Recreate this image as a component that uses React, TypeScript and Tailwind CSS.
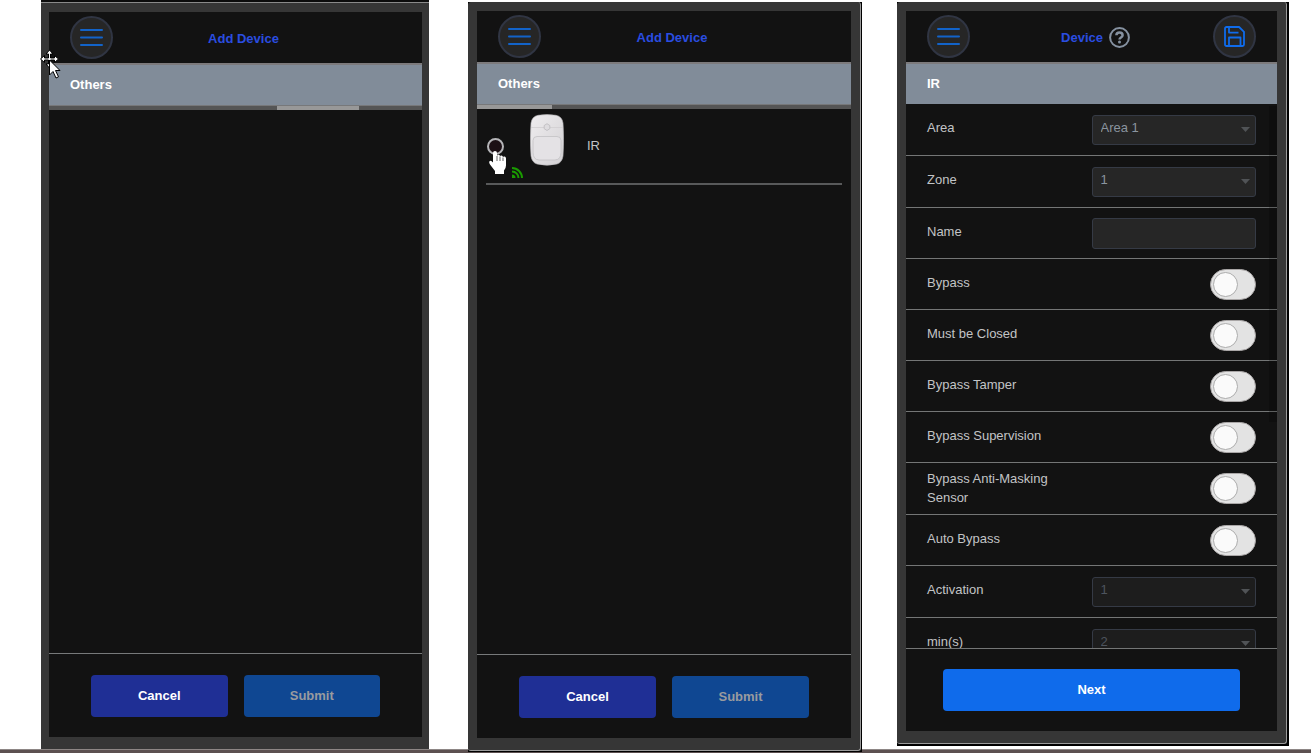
import type { ReactNode } from 'react';

function MenuButton() {
  return (
    <button
      type="button"
      aria-label="Menu"
      className="flex size-[43px] shrink-0 items-center justify-center rounded-full border-2 border-[#303543] bg-[#262626]"
    >
      <svg viewBox="0 0 23 17" className="h-[17px] w-[23px]" stroke="#1263c9" strokeWidth="2" strokeLinecap="round">
        <path d="M1 1h21M1 8.5h21M1 16h21" />
      </svg>
    </button>
  );
}

function SaveButton() {
  return (
    <button
      type="button"
      aria-label="Save"
      className="flex size-[43px] shrink-0 items-center justify-center rounded-full border-2 border-[#303543] bg-[#262626]"
    >
      <svg viewBox="0 0 21 21" className="size-[21px]" fill="none" stroke="#0f6cec" strokeWidth="1.8" strokeLinejoin="round">
        <path d="M2.5 1h12.600L20 5.800v12.700a1.500 1.500 0 0 1-1.500 1.500h-16A1.500 1.500 0 0 1 1 18.500v-16A1.500 1.500 0 0 1 2.500 1Z" />
        <path d="M5 1v5.600h9.500M5 20v-8.500h11.500V20" />
      </svg>
    </button>
  );
}

function HelpIcon() {
  return (
    <svg viewBox="0 0 21 21" className="size-[21px]" fill="none" stroke="#8591a0">
      <circle cx="10.5" cy="10.5" r="9.400" strokeWidth="2" />
      <path d="M7.400 8.300c0-3.800 6.200-3.800 6.200 0 0 2.200-3.100 2.100-3.100 4.200" strokeWidth="2.500" />
      <circle cx="10.5" cy="15" r="1.500" fill="#8591a0" stroke="none" />
    </svg>
  );
}

function Bar({ children }: { children: ReactNode }) {
  return (
    <h2 className="flex h-[42px] shrink-0 items-center border-t-2 border-[#7c7a7c] bg-[#818c99] px-[21px] text-[13px] font-bold text-white">
      {children}
    </h2>
  );
}

function AddDeviceHeader() {
  return (
    <header className="flex h-[51px] shrink-0 items-center pr-12 pl-[21px]">
      <MenuButton />
      <h1 className="flex-1 pt-0.5 text-center text-[13px] font-bold text-[#2a4de0]">Add Device</h1>
    </header>
  );
}

function AddDeviceFooter() {
  return (
    <footer className="flex h-[84px] shrink-0 items-center gap-4 border-t border-[#77797a] px-[42px]">
      <button type="button" className="h-[42px] flex-1 rounded-[4px] bg-[#1f2f95] text-[13px] font-bold text-white">
        Cancel
      </button>
      <button
        type="button"
        disabled
        className="h-[42px] flex-1 rounded-[4px] bg-[#0f4792] text-[13px] font-bold text-[#999b9f]"
      >
        Submit
      </button>
    </footer>
  );
}

function Sensor() {
  return (
    <svg viewBox="0 0 34 52" className="h-[52px] w-[34px]">
      <defs>
        <linearGradient id="shell" x1="0" y1="0" x2="1" y2="1">
          <stop offset="0" stopColor="#efedef" />
          <stop offset="1" stopColor="#d2d0d3" />
        </linearGradient>
      </defs>
      <path
        d="M8 1.300Q17-.2 26 1.300Q32 2.500 33 9Q34.300 26 33 42Q32 48.500 27 50Q17 52.500 7 50Q2 48.500 1 42Q-.3 26 1 9Q2 2.500 8 1.300Z"
        fill="url(#shell)"
        stroke="#b9b7ba"
        strokeWidth=".6"
      />
      <path d="M1 13.500H14M20 13.500H33" fill="none" stroke="#d0ced1" strokeWidth=".8" />
      <path d="M14.200 11.500l2.800-1.800 2.800 1.800v3.200l-2.800 1.800-2.800-1.800Z" fill="#dedcdf" stroke="#bbb9bc" strokeWidth=".8" />
      <path
        d="M7 22.500h20q4 0 4 4v12q0 7-6 7.500H9q-6-.5-6-7.500v-12q0-4 4-4Z"
        fill="#e4e2e5"
        stroke="#c3c1c4"
        strokeWidth=".8"
      />
    </svg>
  );
}

function SelectRow({ id, label, value, disabled }: { id: string; label: string; value: string; disabled?: boolean }) {
  return (
    <div className="flex h-[52px] shrink-0 items-center justify-between border-b border-[#747676] px-[21px]">
      <label htmlFor={id} className="pb-1 leading-[19px]">
        {label}
      </label>
      <div className="grid w-1/2 items-center">
        <select
          id={id}
          disabled={disabled}
          className="col-start-1 row-start-1 h-[30px] appearance-none rounded-[3px] border border-[#353a45] bg-[#262626] px-2 pb-1 text-[#8a949f] disabled:bg-[#1d1d1d] disabled:text-[#4d545e] disabled:opacity-100"
        >
          <option>{value}</option>
        </select>
        <svg
          viewBox="0 0 9 5"
          className="pointer-events-none col-start-1 row-start-1 mr-1.5 h-[5px] w-[9px] justify-self-end"
          fill="#505356"
        >
          <path d="M0 0h9L4.500 5Z" />
        </svg>
      </div>
    </div>
  );
}

function ToggleRow({ id, label, tall }: { id: string; label: string; tall?: boolean }) {
  return (
    <div
      className={`flex shrink-0 items-center justify-between border-b border-[#747676] px-[21px] ${tall ? 'h-[52px]' : 'h-[51px]'}`}
    >
      <label htmlFor={id} className={`max-w-[150px] leading-[19px] ${tall ? 'pb-0.5' : 'pb-1'}`}>
        {label}
      </label>
      <input
        id={id}
        type="checkbox"
        role="switch"
        className="block h-[31px] w-[46px] shrink-0 appearance-none rounded-full border border-[#a9a6a6] bg-[#e3e3e3] p-0.5 before:block before:size-[25px] before:rounded-full before:border before:border-[#acacac] before:bg-[#fafafa] before:content-[''] checked:bg-[#0f6beb] checked:before:ml-auto"
      />
    </div>
  );
}

export default function App() {
  return (
    <main className="relative flex h-screen min-h-[600px] bg-white pr-[22px] pl-[41px] font-['Liberation_Sans',Arial,sans-serif] text-[13px] text-[#c2c4c6]">
      <div className="absolute inset-x-0 bottom-0 h-1 border-t border-[#8d8685] bg-[#5c5050]" />

      <section className="relative mb-1 flex flex-[388] border-t-2 border-[#0c0c0c]">
        <div className="flex flex-1 border-t border-[#8a8a8a] bg-[#363636] pt-[9px] pr-[7px] pb-3 pl-2">
          <div className="flex flex-1 flex-col bg-[#121212]">
            <AddDeviceHeader />
            <Bar>Others</Bar>
            <div className="flex h-[5px] shrink-0 border-t border-[#77787a] bg-[#555555]">
              <div className="w-[61%]" />
              <div className="w-[22%] bg-[#989898]" />
            </div>
            <div className="flex-1" />
            <AddDeviceFooter />
          </div>
        </div>
        <svg viewBox="0 0 24 30" className="absolute top-[47px] -left-px h-[30px] w-6" fill="#fff" stroke="#000" strokeWidth="1">
          <path d="M9.500 1l3.500 4h-2.500v4h4V6.500l4 3.500-4 3.500V11h-4v4H13l-3.500 4L6 15h2.500v-4h-4v2.500L.5 10l4-3.500V9h4V5H6Z" />
          <path d="M9.500 11v15l3.500-3.500 3 6.500 2.500-1.200-3-6.300h4.500Z" />
        </svg>
      </section>

      <section className="relative mt-0.5 mb-px ml-[39px] flex flex-[393] bg-black pr-px pb-px">
        <div className="flex flex-1 rounded-[3px] border-r border-b border-[#9a9a9a] bg-[#363636] pt-[9px] pr-[9px] pb-3 pl-[9px]">
          <div className="flex flex-1 flex-col bg-[#121212]">
            <AddDeviceHeader />
            <Bar>Others</Bar>
            <div className="h-[5px] shrink-0 border-t border-[#77787a] bg-[#555555]">
              <div className="h-1 w-1/5 bg-[#989898]" />
            </div>
            <div className="flex-1 px-[9px]">
              <div className="relative flex h-[76px] items-center border-b-2 border-[#58595a]">
                <input
                  id="device-ir"
                  type="radio"
                  name="device"
                  className="ml-px size-[17px] appearance-none rounded-full border-2 border-[#b5b5b8] bg-[#1c1015]"
                />
                <label htmlFor="device-ir" className="flex flex-1 items-center pl-[26px]">
                  <span className="pb-3">
                    <Sensor />
                  </span>
                  <span className="pl-[23px]">IR</span>
                </label>
                <svg
                  viewBox="0 0 11 11"
                  className="absolute bottom-[5px] left-[26px] size-[11px]"
                  fill="none"
                  stroke="#1a9c00"
                  strokeWidth="2"
                >
                  <path d="M0 11V7.500A3.500 3.500 0 0 1 3.500 11Z" fill="#1a9c00" stroke="none" />
                  <path d="M0 4.500a6.500 6.500 0 0 1 6.500 6.500M0 1a10 10 0 0 1 10 10" />
                </svg>
                <svg viewBox="0 0 17 23" className="absolute top-[42px] left-[3px] h-[23px] w-[17px]">
                  <path
                    d="M4 2Q4 0 6 0t2 2V5Q8.200 3.800 9.500 3.800T11 5.200Q11.300 4.300 12.500 4.400T14 6Q14.500 5.200 15.600 5.500T17 7.200V14.500Q17 17 15 19.500V23H6V20L1 13.500Q-.5 11 .8 10T4 11.500Z"
                    fill="#fff"
                  />
                  <path d="M8 5v5M11 5.500V10M14 6.500V10" stroke="#222" strokeWidth=".7" />
                </svg>
              </div>
            </div>
            <AddDeviceFooter />
          </div>
        </div>
      </section>

      <section className="mt-0.5 mb-[7px] ml-[35px] flex flex-[390] bg-black pr-0.5 pb-0.5">
        <div className="flex flex-1 rounded-[3px] border-r border-b border-[#9a9a9a] bg-[#363636] pt-[9px] pr-[9px] pb-3 pl-[9px]">
          <div className="flex min-h-0 flex-1 flex-col bg-[#121212]">
            <header className="flex h-[51px] shrink-0 items-center px-[21px]">
              <MenuButton />
              <div className="flex flex-1 items-center justify-center gap-1.5 pt-0.5 pl-2">
                <h1 className="text-[13px] font-bold text-[#2a4de0]">Device</h1>
                <button type="button" aria-label="Help">
                  <HelpIcon />
                </button>
              </div>
              <SaveButton />
            </header>
            <Bar>IR</Bar>
            <form className="relative flex min-h-0 flex-1 flex-col overflow-hidden">
              <SelectRow id="area" label="Area" value="Area 1" />
              <SelectRow id="zone" label="Zone" value="1" />
              <div className="flex h-[51px] shrink-0 items-center justify-between border-b border-[#747676] px-[21px]">
                <label htmlFor="name" className="pb-1 leading-[19px]">
                  Name
                </label>
                <input
                  id="name"
                  type="text"
                  className="h-[31px] w-1/2 rounded-[3px] border border-[#353a45] bg-[#262626] px-2"
                />
              </div>
              <ToggleRow id="bypass" label="Bypass" />
              <ToggleRow id="must-close" label="Must be Closed" />
              <ToggleRow id="tamper" label="Bypass Tamper" />
              <ToggleRow id="supervision" label="Bypass Supervision" />
              <ToggleRow id="anti-masking" label="Bypass Anti-Masking Sensor" tall />
              <ToggleRow id="auto-bypass" label="Auto Bypass" />
              <SelectRow id="activation" label="Activation" value="1" disabled />
              <SelectRow id="minutes" label="min(s)" value="2" disabled />
              <div className="pointer-events-none absolute top-0.5 right-0 h-[58%] w-2 bg-black/20" />
            </form>
            <footer className="flex h-[83px] shrink-0 items-center border-t border-[#747676] px-[37px]">
              <button type="button" className="h-[42px] flex-1 rounded-[4px] bg-[#0f6beb] font-bold text-white">
                Next
              </button>
            </footer>
          </div>
        </div>
      </section>
    </main>
  );
}
